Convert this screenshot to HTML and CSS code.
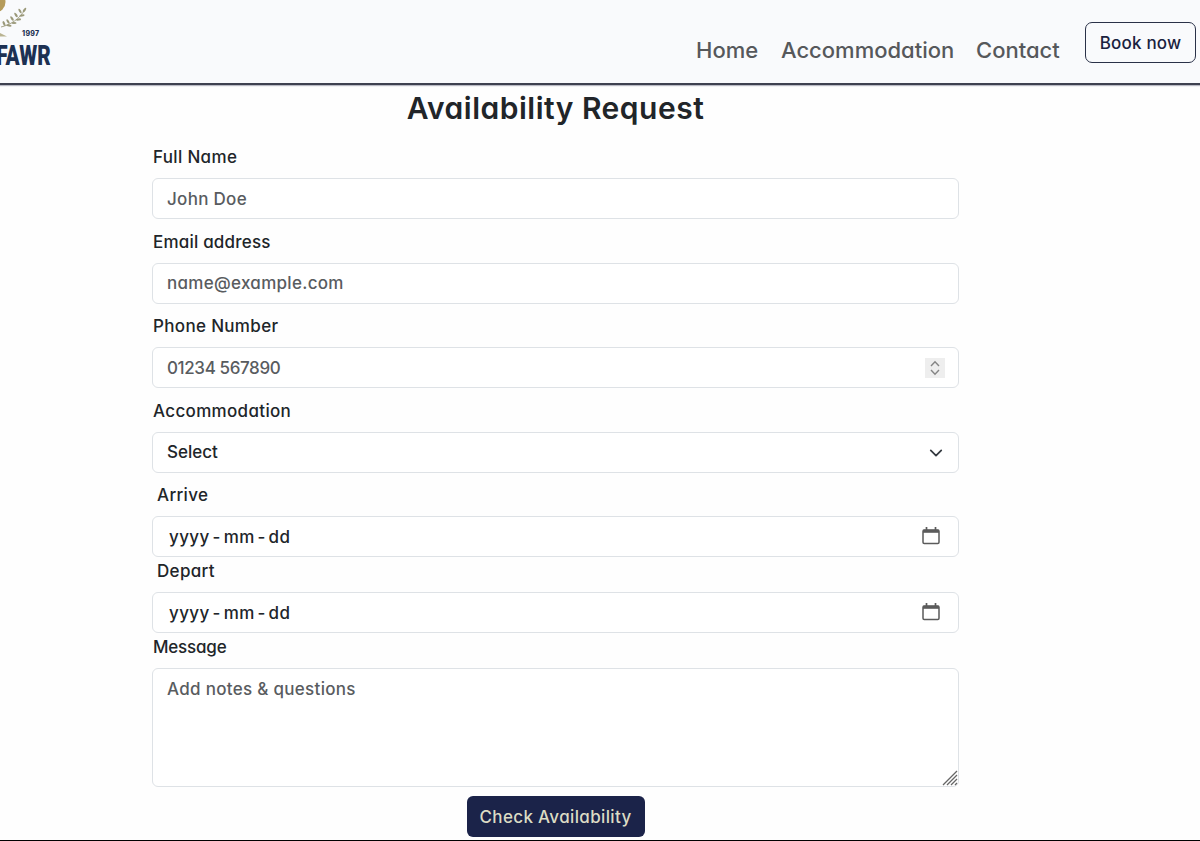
FILE: index.html
```html
<!DOCTYPE html>
<html lang="en">
<head>
<meta charset="utf-8">
<title>Availability Request</title>
<link rel="stylesheet" href="styles.css">
</head>
<body>
<header class="navbar">
  <div class="brand">
    <svg class="brand-art" width="52" height="37" viewBox="0 0 52 37">
      <circle cx="-5" cy="2" r="10.5" fill="#b59b5b"/>
      <g stroke="#a8a68c" fill="none" stroke-width="1"><path d="M1 27C10 25 20 19 25 9"/></g>
      <g fill="#9b997a">
        <ellipse cx="4" cy="23.500" rx="2.600" ry="1.100" transform="rotate(65 4 23.500)"/>
        <ellipse cx="8" cy="21.500" rx="2.600" ry="1.100" transform="rotate(60 8 21.500)"/>
        <ellipse cx="12" cy="18.500" rx="2.600" ry="1.100" transform="rotate(55 12 18.500)"/>
        <ellipse cx="16" cy="15" rx="2.600" ry="1.100" transform="rotate(55 16 15)"/>
        <ellipse cx="20" cy="11" rx="2.600" ry="1.100" transform="rotate(60 20 11)"/>
        <ellipse cx="9" cy="25.500" rx="2.600" ry="1.100" transform="rotate(10 9 25.500)"/>
        <ellipse cx="14" cy="23" rx="2.600" ry="1.100"/>
        <ellipse cx="18.500" cy="19.500" rx="2.600" ry="1.100" transform="rotate(-5 18.500 19.500)"/>
        <ellipse cx="22" cy="15.500" rx="2.600" ry="1.100" transform="rotate(-10 22 15.500)"/>
        <ellipse cx="24.500" cy="10" rx="2.600" ry="1.100" transform="rotate(-55 24.500 10)"/>
      </g>
      <path d="M0 33l7 3.500H0z" fill="#b9b391"/>
    </svg>
    <span class="brand-year">1997</span>
    <span class="brand-name">FAWR</span>
  </div>
  <nav class="links">
    <a class="link link-home">Home</a>
    <a class="link link-acc">Accommodation</a>
    <a class="link link-contact">Contact</a>
    <a class="book">Book now</a>
  </nav>
</header>
<main class="form">
  <h1 class="title"><span>Availability Request</span></h1>
  <div class="group"><div class="label">Full Name</div><div class="field hint">John Doe</div></div>
  <div class="group"><div class="label snug">Email address</div><div class="field hint">name@example.com</div></div>
  <div class="group"><div class="label">Phone Number</div>
    <div class="field hint phone">01234 567890
      <span class="spinner"><svg width="20" height="20" viewBox="0 0 20 20" fill="none" stroke="#858585" stroke-width="1.400"><path d="M6 8l4-4.200L14 8M6 12l4 4.200L14 12"/></svg></span>
    </div>
  </div>
  <div class="group"><div class="label">Accommodation</div>
    <div class="field select">Select
      <svg width="14" height="14" viewBox="0 0 16 16" fill="none" stroke="#343a40" stroke-width="2" stroke-linecap="round" stroke-linejoin="round"><path d="m2 5 6 6 6-6"/></svg>
    </div>
  </div>
  <div class="group tight"><div class="label inset">Arrive</div>
    <div class="field date"><span class="ymd">yyyy - mm - dd</span>
      <svg width="18" height="18" viewBox="0 0 18 18" fill="none" stroke="#5b5b5b"><rect x="1" y="3" width="16" height="13.500" rx="1.200" stroke-width="1.500"/><path d="M1 4.300h16" stroke-width="3"/><path d="M4.500 0v4M13.500 0v4" stroke-width="1.700"/></svg>
    </div>
  </div>
  <div class="group tight"><div class="label inset">Depart</div>
    <div class="field date"><span class="ymd">yyyy - mm - dd</span>
      <svg width="18" height="18" viewBox="0 0 18 18" fill="none" stroke="#5b5b5b"><rect x="1" y="3" width="16" height="13.500" rx="1.200" stroke-width="1.500"/><path d="M1 4.300h16" stroke-width="3"/><path d="M4.500 0v4M13.500 0v4" stroke-width="1.700"/></svg>
    </div>
  </div>
  <div class="group"><div class="label narrow">Message</div>
    <div class="field hint area">Add notes &amp; questions
      <svg class="grip" width="16" height="16" viewBox="0 0 16 16" stroke="#666" stroke-width="1.300"><path d="M1 15L15 1M5 15L15 5M9 15l6-6M13 15l2-2"/></svg>
    </div>
  </div>
  <div class="submit">Check Availability</div>
</main>
<div class="edge"></div>
</body>
</html>
```

FILE: styles.css
```css
* { box-sizing: border-box; }
body {
  margin: 0;
  width: 1200px;
  height: 841px;
  overflow: hidden;
  display: flex;
  flex-direction: column;
  background: #fefefe;
  color: #212529;
  font: 500 17px/27px Inter, "Open Sans", sans-serif;
  font-feature-settings: "cv11";
}
.navbar {
  flex: none;
  height: 85px;
  display: flex;
  justify-content: space-between;
  background: #f9fafc;
  border-bottom: 2px solid #3e4150;
  box-shadow: 0 1px 1px #b9bac4;
}
.brand {
  width: 60px;
  height: 83px;
  position: relative;
  color: #1d3153;
}
.brand-art { display: block; }
.brand-year {
  position: absolute;
  left: 22px;
  top: 29px;
  font: 800 7px/10px Inter, sans-serif;
  letter-spacing: 0.3px;
}
.brand-name {
  position: absolute;
  right: 9px;
  top: 43px;
  font: 900 28px/26px "Roboto", sans-serif;
  transform: scaleX(0.74);
  transform-origin: right;
}
.links {
  display: flex;
  align-items: flex-start;
  padding: 22px 4px 0 0;
}
.link {
  color: #56585b;
  font-size: 22px;
  line-height: 30px;
  padding-top: 13px;
  font-weight: 450;
  white-space: nowrap;
}
.link-home { width: 85px; }
.link-acc { width: 195px; }
.link-contact { width: 109px; }
.book {
  width: 111px;
  height: 41px;
  border: 1.500px solid #2a3148;
  border-radius: 7px;
  text-align: center;
  line-height: 41px;
  letter-spacing: 0.2px;
  color: #1a2240;
  white-space: nowrap;
}
.form {
  width: 807px;
  margin-left: 152px;
  display: flex;
  flex-direction: column;
}
.title {
  margin: 0;
  height: 58px;
  padding-top: 5px;
  text-align: center;
  font-size: 30px;
  line-height: 36px;
  font-weight: 600;
  letter-spacing: 0.5px;
}
.group { margin-bottom: 8.500px; }
.tight { margin-bottom: 0; }
.label {
  height: 27px;
  margin-bottom: 8px;
  padding-left: 1px;
  line-height: 28px;
  letter-spacing: 0.33px;
}
.snug { letter-spacing: 0.2px; }
.narrow { letter-spacing: -0.2px; }
.inset { padding-left: 5px; }
.field {
  height: 41px;
  display: flex;
  align-items: center;
  justify-content: space-between;
  border: 1px solid #dee2e6;
  border-radius: 6px;
  background: #fff;
  padding: 1px 13px 0 14px;
}
.hint { color: #595c5f; font-weight: 450; letter-spacing: 0.3px; }
.phone { letter-spacing: -0.38px; padding-top: 0; line-height: 28px; }
.spinner { display: flex; background: #eeeeee; }
.select { padding-right: 15px; }
.date { padding: 0 18px 2px 16px; }
.ymd {
  padding-top: 3px;
  letter-spacing: 0.4px;
  word-spacing: -2.1px;
}
.area {
  height: 119px;
  align-items: flex-start;
  padding: 7px 0 0 14px;
}
.grip { align-self: flex-end; }
.submit {
  align-self: center;
  width: 178px;
  height: 41px;
  border-radius: 6px;
  background: #1b2349;
  color: #dcdcc4;
  text-align: center;
  line-height: 42px;
  font-weight: 450;
  letter-spacing: 0.35px;
}
.edge {
  flex: none;
  height: 1px;
  margin-top: auto;
  background: #000;
}
```
